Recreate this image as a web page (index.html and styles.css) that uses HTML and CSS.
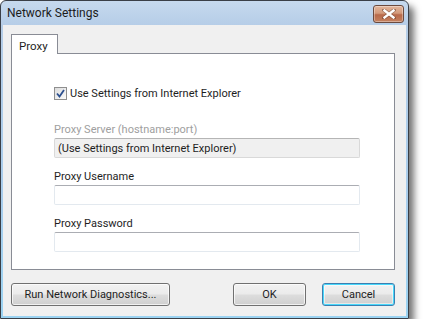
FILE: index.html
```html
<!DOCTYPE html>
<html>
<head>
    <title>Network Settings</title>
    <meta name="viewport" content="width=device-width, initial-scale=1">
    <link rel="stylesheet" href="styles.css">
</head>
<body>
    <div class="window">
        <div class="titlebar">
            <span class="title">Network Settings</span>
            <button class="close-button" aria-label="Close">
                <svg width="14" height="10" viewBox="0 0 14 10">
                    <path d="M2 1 L12 9 M12 1 L2 9" stroke="#5a3424" stroke-width="3.6" stroke-linecap="square" opacity="0.5"/>
                    <path d="M2.5 1.5 L11.5 8.5 M11.5 1.5 L2.5 8.5" stroke="#fff" stroke-width="2.4" stroke-linecap="square"/>
                </svg>
            </button>
        </div>

        <div class="client">
            <div class="tabs">
                <div class="tab active">Proxy</div>
            </div>

            <div class="tab-panel">
                <label class="check-row">
                    <span class="checkbox">
                        <svg width="9" height="9" viewBox="0 0 9 9">
                            <path d="M1 4.5 L3.5 7.5 L8 1" fill="none" stroke="#2b4f8f" stroke-width="1.8"/>
                        </svg>
                    </span>
                    Use Settings from Internet Explorer
                </label>

                <div class="field disabled">
                    <div class="field-label">Proxy Server (hostname:port)</div>
                    <input class="text-input" type="text" value="(Use Settings from Internet Explorer)" readonly>
                </div>

                <div class="field">
                    <div class="field-label">Proxy Username</div>
                    <input class="text-input" type="text">
                </div>

                <div class="field">
                    <div class="field-label">Proxy Password</div>
                    <input class="text-input" type="password">
                </div>
            </div>

            <div class="button-row">
                <button class="push-button wide">Run Network Diagnostics...</button>
                <span class="spacer"></span>
                <button class="push-button">OK</button>
                <button class="push-button default">Cancel</button>
            </div>
        </div>
    </div>
</body>
</html>
```

FILE: styles.css
```css
* {
    box-sizing: border-box;
}

body {
    font-family: Roboto, "Noto Sans", sans-serif;
    font-size: 11px;
    color: #1e1e1e;
    background-color: #fff;
    margin: 0;
    padding: 0;
}

.window {
    width: 409px;
    height: 319px;
    border: 1px solid #3a3f47;
    border-radius: 6px 6px 0 0;
    background: linear-gradient(#c6d9ee, #b5cde7 25px, #a9cdec 60%, #9bd3f2);
    box-shadow: 5px 6px 7px rgba(0, 0, 0, 0.55);
    display: flex;
    flex-direction: column;
}

.titlebar {
    height: 24px;
    flex: none;
    display: flex;
    align-items: flex-start;
    justify-content: space-between;
}

.title {
    font-size: 12px;
    color: #1c1c1c;
    margin: 5px 0 0 6px;
}

.close-button {
    width: 31px;
    height: 18px;
    margin: 4px 4px 0 0;
    padding: 0;
    border: 1px solid #6b4a3e;
    border-radius: 3px;
    background: linear-gradient(#e3b69c, #d39a7b 45%, #b8694a 55%, #c4825f);
    box-shadow: inset 0 0 0 1px rgba(255, 255, 255, 0.35);
    display: flex;
    align-items: center;
    justify-content: center;
}

.client {
    flex: 1;
    margin: 0 2px 2px 2px;
    background-color: #f0f0f0;
    padding: 8px 11px 0 8px;
    display: flex;
    flex-direction: column;
}

.tabs {
    display: flex;
    height: 20px;
    flex: none;
}

.tab {
    width: 47px;
    padding: 4px 0 0 7px;
    font-size: 11.5px;
    background-color: #fff;
    border: 1px solid #898c95;
    border-bottom: none;
    position: relative;
    top: 1px;
    z-index: 1;
}

.tab-panel {
    height: 217px;
    flex: none;
    background-color: #fff;
    border: 1px solid #898c95;
    padding: 32px 0 0 42px;
}

.check-row {
    display: flex;
    align-items: center;
    gap: 3px;
    height: 14px;
}

.checkbox {
    width: 13px;
    height: 13px;
    border: 1px solid #8f8f8f;
    background: linear-gradient(135deg, #dcdcdc, #fbfbfb);
    display: flex;
    align-items: center;
    justify-content: center;
}

.field {
    margin-top: 23px;
}

.field + .field {
    margin-top: 12px;
}

.field-label {
    height: 15px;
    color: #1e1e1e;
}

.field.disabled .field-label {
    color: #a0a0a0;
}

.text-input {
    display: block;
    width: 306px;
    height: 20px;
    margin: 0;
    padding: 0 3px;
    font-family: inherit;
    font-size: 11px;
    color: #1e1e1e;
    background-color: #fff;
    border: 1px solid #e3e9ef;
    border-top-color: #abadb3;
    border-radius: 2px;
    outline: none;
}

.field.disabled .text-input {
    background-color: #f0f0f0;
    border-color: #d9d9d9;
    border-top-color: #b5b5b5;
}

.button-row {
    display: flex;
    margin-top: 13px;
    gap: 16px;
}

.spacer {
    flex: 1;
}

.push-button {
    width: 73px;
    height: 23px;
    padding: 0;
    font-family: inherit;
    font-size: 11px;
    color: #1e1e1e;
    border: 1px solid #707070;
    border-radius: 3px;
    background: linear-gradient(#f2f2f2, #ebebeb 48%, #dddddd 52%, #cfcfcf);
    box-shadow: inset 0 0 0 1px rgba(255, 255, 255, 0.7);
}

.push-button.wide {
    width: 159px;
}

.push-button.default {
    border-color: #3c7fb1;
    box-shadow: inset 0 0 0 1px #48d8fb, inset 0 0 0 2px rgba(255, 255, 255, 0.5);
}
```
